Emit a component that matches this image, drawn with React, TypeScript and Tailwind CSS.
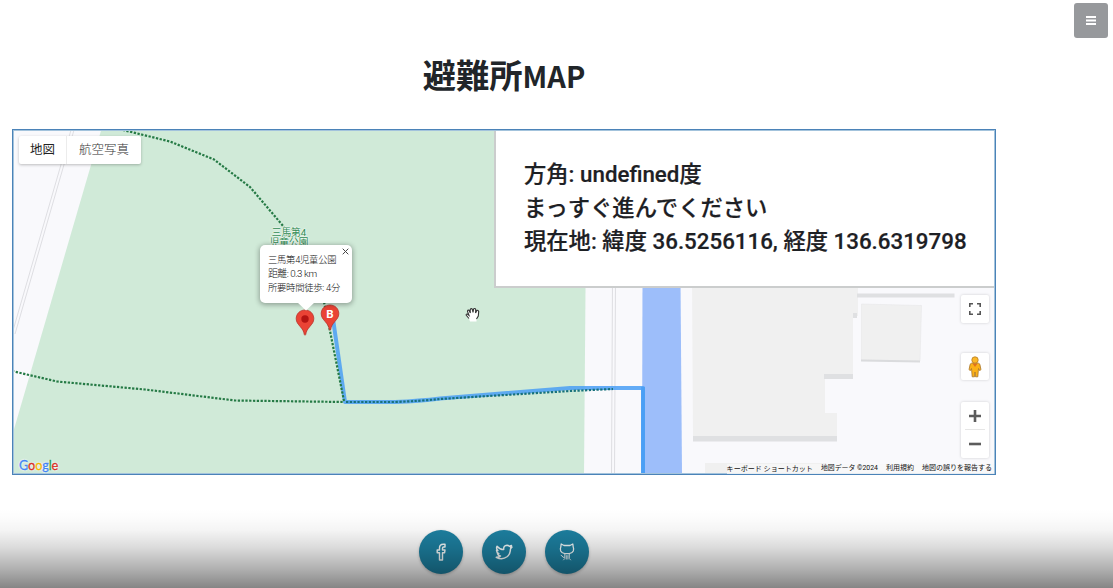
import { ReactNode } from 'react';

const ROBOTO = "font-['Roboto','Noto_Sans_CJK_JP',sans-serif]";

function MapArtwork() {
  return (
    <svg className="absolute inset-0 block" width="980" height="342" viewBox="14 131 980 342">
      <rect x="12" y="129" width="984" height="346" fill="#f9f9fc" />
      <g stroke="#dedee2" strokeWidth="1" fill="none">
        <path d="M71 130L12 334M74 130L15 334" />
        <path d="M612.5 280L611.5 475M615.5 280L614.5 475" />
      </g>
      <path d="M101.500 129H585.500V290L584 475H12V436Z" fill="#d0ead8" />
      <path d="M642.500 280H680.500L682 475H642Z" fill="#9dbefa" />
      <path d="M692 280H858V316H853V376H825V413H837V438H693Z" fill="#f0f0f0" />
      <path d="M693 436H837V441.500H693Z" fill="#dfe0e2" />
      <path d="M824 374H853V379H824ZM853 313H857V318H853ZM857 293.500H954.500V297.500H857Z" fill="#dfe0e2" />
      <path d="M861.500 304L921.500 305.500L920 361L861.500 360Z" fill="#f0f0f0" stroke="#e8e8ea" strokeWidth="0.6" />
      <path d="M861 359.500L920 360.500V362.500L861 361.500Z" fill="#dadbdd" />
      <path d="M705 463H825V475H705Z" fill="#f0f0f0" />
      <g fill="none" stroke="#4a9ff5" strokeLinejoin="round">
        <path d="M332 312L345 402H395Q420 401 440 398.500L570 388H643V475" strokeWidth="4" opacity=".85" />
        <path d="M643 387V475" strokeWidth="3.600" />
      </g>
      <g fill="none" stroke="#257a45" strokeWidth="2.200" strokeDasharray="2.300 1.500">
        <path d="M119 129L170 141.500L214 159.500L250 187L284 227" />
        <path d="M12 371L57 381.500L145 389.500L235 400.500L344 402" />
        <path d="M324 302L330 331L344 401" />
        <path d="M346 402H395Q420 401 440 399L570 391L613 389" stroke="#17717b" />
      </g>
    </svg>
  );
}

function Pin({ label, className }: { label?: string; className: string }) {
  return (
    <svg className={className} width="20" height="28" viewBox="0 0 20 28">
      <path
        d="M10 1C4.900 1 1.200 4.800 1.200 9.700C1.200 13 3 15 5.300 17.700C7.600 20.300 8.800 22.500 9.300 25.500Q10 27 10.700 25.500C11.200 22.500 12.400 20.300 14.700 17.700C17 15 18.800 13 18.800 9.700C18.800 4.800 15.100 1 10 1Z"
        fill="#ea4335"
        stroke="#b8342c"
        strokeWidth="0.800"
      />
      {label ? (
        <text x="10" y="13.800" textAnchor="middle" fill="#fff" fontSize="11.500" fontWeight="700" fontFamily="Roboto, sans-serif">
          {label}
        </text>
      ) : (
        <circle cx="10" cy="10" r="3.700" fill="#b31412" />
      )}
    </svg>
  );
}

function InfoWindow() {
  return (
    <div className="absolute left-[246px] top-[114px] h-[58px] w-[92px] rounded-[5px] bg-white pl-2 pt-[8px] shadow-[0_1px_5px_1px_rgba(0,0,0,0.3)]">
      <div className="whitespace-nowrap text-[9.800px] font-light leading-[13.800px] text-[#111]">
        <p className="text-[9.300px] tracking-[-0.25px]">三馬第4児童公園</p>
        <p className="tracking-[-0.450px]">距離: 0.3 km</p>
        <p className="text-[9.300px] tracking-[-0.25px]">所要時間徒歩: 4分</p>
      </div>
      <svg className="absolute right-[3px] top-[3px]" width="7" height="7" viewBox="0 0 7 7">
        <path d="M.7.7L6.300 6.300M6.300.7L.7 6.300" stroke="#444" strokeWidth="1" />
      </svg>
      <svg className="absolute left-[37px] top-[57px]" width="18" height="9" viewBox="0 0 18 9">
        <path d="M0 0H18L9 8.500Z" fill="#fff" />
      </svg>
    </div>
  );
}

function GoogleLogo() {
  return (
    <div className="absolute bottom-0 left-[5px] font-['Lato',sans-serif] text-[12.800px] leading-[15px] tracking-[-0.2px] [-webkit-text-stroke:0.3px] [text-shadow:0_0_2px_#fff,0_0_2px_#fff]">
      <span className="text-[#4285f4]">G</span>
      <span className="text-[#d93025]">o</span>
      <span className="text-[#f5b400]">o</span>
      <span className="text-[#4285f4]">g</span>
      <span className="text-[#249a4c]">l</span>
      <span className="text-[#d93025]">e</span>
    </div>
  );
}

function HandCursor() {
  return (
    <svg className="absolute left-[451px] top-[176px]" width="16" height="16" viewBox="0 0 16 16">
      <path
        d="M5 14.500L4 11.500L1.300 8.300Q.8 6.800 2.300 7L4 8.300L2.500 4.500Q2.500 2.700 4 3.200L5.300 5.300L5.200 2.700Q6 .8 7.300 2.200L8 5L8.600 2Q9.800.8 10.700 2.300L10.600 5.500L11.800 3.500Q13.200 2.800 13.700 4.500L13.300 9L11.500 12V14.500Z"
        fill="#fff"
      />
      <path
        d="M4 11.500L1.300 8.300Q.8 6.800 2.300 7L4 8.300L2.500 4.500Q2.500 2.700 4 3.200L5.300 6L5.200 2.700Q6 .8 7.300 2.200L8 5.500L8.600 2Q9.800.8 10.700 2.300L10.600 6L11.800 3.500Q13.200 2.800 13.700 4.500L13.300 9L11.500 12"
        fill="none"
        stroke="#333"
        strokeWidth="1.100"
      />
    </svg>
  );
}

function Pegman() {
  return (
    <svg width="14" height="22" viewBox="0 0 14 22">
      <path
        d="M3.500 7.200H10.500Q11.800 7.500 12 9L12.900 13.300Q12.700 14.800 11.200 14.300L10.500 12.500L9.800 20.800H7.500L7 16L6.500 20.800H4.200L3.500 12.500L2.800 14.300Q1.300 14.800 1.100 13.300L2 9Q2.200 7.500 3.500 7.200Z"
        fill="#fbb117"
        stroke="#a8752a"
        strokeWidth="0.800"
      />
      <path d="M4.500 7.500H9.500L7 11Z" fill="#e0701d" />
      <circle cx="7" cy="4" r="3.200" fill="#fbb829" stroke="#b57b25" strokeWidth="0.800" />
    </svg>
  );
}

const controlBox = 'flex w-7 items-center justify-center rounded-[2px] bg-white shadow-[0_0_3px_rgba(0,0,0,0.18)]';

function MapControls() {
  return (
    <div className="absolute right-[5px] top-[164px] flex flex-col">
      <div className={`${controlBox} h-7`}>
        <svg width="12" height="12" viewBox="0 0 12 12">
          <path d="M.8 4V.8H4M8 .8H11.200V4M11.200 8V11.200H8M4 11.200H.8V8" fill="none" stroke="#555" strokeWidth="1.600" />
        </svg>
      </div>
      <div className={`${controlBox} mt-[30px] h-[27px]`}>
        <Pegman />
      </div>
      <div className={`${controlBox} mt-[22px] h-[56px] flex-col`}>
        <div className="flex h-[27px] items-center">
          <svg width="12" height="12" viewBox="0 0 12 12">
            <path d="M0 6H12M6 0V12" stroke="#5c5c5c" strokeWidth="2.600" />
          </svg>
        </div>
        <div className="h-px w-5 bg-[#e6e6e6]" />
        <div className="flex h-[28px] items-center">
          <svg width="12" height="4" viewBox="0 0 12 4">
            <path d="M0 2H12" stroke="#5c5c5c" strokeWidth="2.600" />
          </svg>
        </div>
      </div>
    </div>
  );
}

function ShelterMap() {
  return (
    <section className={`h-[346px] w-[984px] border border-[#4b83b8] bg-[#a3c3dc] p-px ${ROBOTO}`}>
      <div className="relative h-full w-full">
        <MapArtwork />
        <div className="absolute left-[5px] top-[5px] flex h-7 rounded-[2px] bg-white text-[12.500px] leading-[27px] shadow-[0_1px_3px_rgba(0,0,0,0.25)]">
          <div className="w-[48px] border-r border-[#ececec] text-center text-[#222]">地図</div>
          <div className="w-[74px] text-center font-light text-[#333]">航空写真</div>
        </div>
        <div className="absolute left-[245px] top-[97px] w-[60px] text-center text-[9.700px] leading-[9.500px] text-[#2f8a52] [text-shadow:0_0_2px_#fff,0_0_2px_#fff]">
          <p>三馬第4</p>
          <p>児童公園</p>
        </div>
        <Pin className="absolute left-[281px] top-[178px]" />
        <Pin className="absolute left-[306px] top-[173px]" label="B" />
        <InfoWindow />
        <HandCursor />
        <GoogleLogo />
        <div className="absolute bottom-[-1px] right-0 flex h-[10px] gap-[8px] whitespace-nowrap bg-[#f7f7f8]/80 pr-[2px] text-[7.050px] leading-[9px] text-[#111]">
          <span>キーボード ショートカット</span>
          <span className="text-[6.900px]">地図データ ©2024</span>
          <span className="text-[7px]">利用規約</span>
          <span className="text-[7px]">地図の誤りを報告する</span>
        </div>
        <MapControls />
        <div className="absolute right-0 top-0 h-[157px] w-[500px] border-b-2 border-l-2 border-[#cbcdcd] bg-white pl-[28px] pt-[27px] text-[22.320px] font-medium leading-[33.500px] text-[#1d2024] [-webkit-text-stroke:0.2px]">
          <p>方角: undefined度</p>
          <p>まっすぐ進んでください</p>
          <p className="whitespace-nowrap">現在地: 緯度 36.5256116, 経度 136.6319798</p>
        </div>
      </div>
    </section>
  );
}

const socialLinks: { name: string; art: ReactNode }[] = [
  {
    name: 'Facebook',
    art: <path d="M7.500 17V9.700H5.200V7H7.500V5Q7.500 1.200 11.200 1.200H13V4H11.700Q10.500 4 10.500 5.200V7H13L12.600 9.700H10.500V17Z" />,
  },
  {
    name: 'Twitter',
    art: <path d="M1.200 14.300Q4.200 14.300 5.500 13Q3 12.700 2.500 10.700H3.900Q1.500 9.600 1.500 7.200L2.900 7.600Q.8 5.600 2 3.200Q4.800 6.500 8.700 6.600Q8.300 2.500 12 2.300Q13.300 2.300 14.300 3.300L16.500 2.500L15.500 4.500L17 4.100L15.500 5.900Q15.400 11 12 13.800Q7.200 17.500 1.200 14.300Z" />,
  },
  {
    name: 'GitHub',
    art: (
      <>
        <path d="M3.200 1L6 2.500H12L14.800 1L15.200 4Q16 5.500 15.300 8Q14.200 10.300 11.200 10.700H6.800Q3.800 10.300 2.700 8Q2 5.500 2.800 4Z" strokeWidth="1.300" />
        <path d="M6.800 10.700V15.500L5.300 17.200M8.300 12.200V16.500M9.900 12.200V16.500M11.300 10.700V15.500L12.800 17.200M6.600 14.300H5Q4.300 12.500 2.800 12.300" strokeWidth="0.900" />
      </>
    ),
  },
];

export default function App() {
  return (
    <div className="relative h-[588px] w-full overflow-hidden bg-white">
      <main className="flex w-[1008px] flex-col items-center px-3">
        <h1 className="mt-[49px] h-[80px] font-['Noto_Sans_CJK_JP',sans-serif] text-[33.300px] font-bold leading-[50px] text-[#212529]">
          避難所<span className="text-[29px]">MAP</span>
        </h1>
        <ShelterMap />
        <footer className="mt-[55px] flex gap-[19px]">
          {socialLinks.map(({ name, art }) => (
            <a
              key={name}
              href="#"
              aria-label={name}
              className="flex size-11 items-center justify-center rounded-full bg-[#1d81a2] shadow-[0_1px_3px_rgba(0,0,0,0.25)]"
            >
              <svg width="18" height="18" viewBox="0 0 18 18" fill="none" stroke="#f4fafb" strokeWidth="1.450" strokeLinejoin="round">
                {art}
              </svg>
            </a>
          ))}
        </footer>
      </main>
      <button
        aria-label="menu"
        className="absolute right-[5px] top-[3px] flex h-[35px] w-[34px] items-center justify-center rounded-[3px] bg-[#97999c]"
      >
        <svg width="10" height="9" viewBox="0 0 10 9">
          <path d="M0 1H10M0 4.500H10M0 8H10" stroke="#fff" strokeWidth="1.800" />
        </svg>
      </button>
      <div className="pointer-events-none absolute inset-x-0 bottom-0 h-20 bg-[linear-gradient(to_bottom,transparent_0%,rgba(0,0,0,0.01)_12%,rgba(0,0,0,0.045)_28%,rgba(0,0,0,0.145)_50%,rgba(0,0,0,0.3)_75%,rgba(0,0,0,0.48)_100%)]" />
    </div>
  );
}
